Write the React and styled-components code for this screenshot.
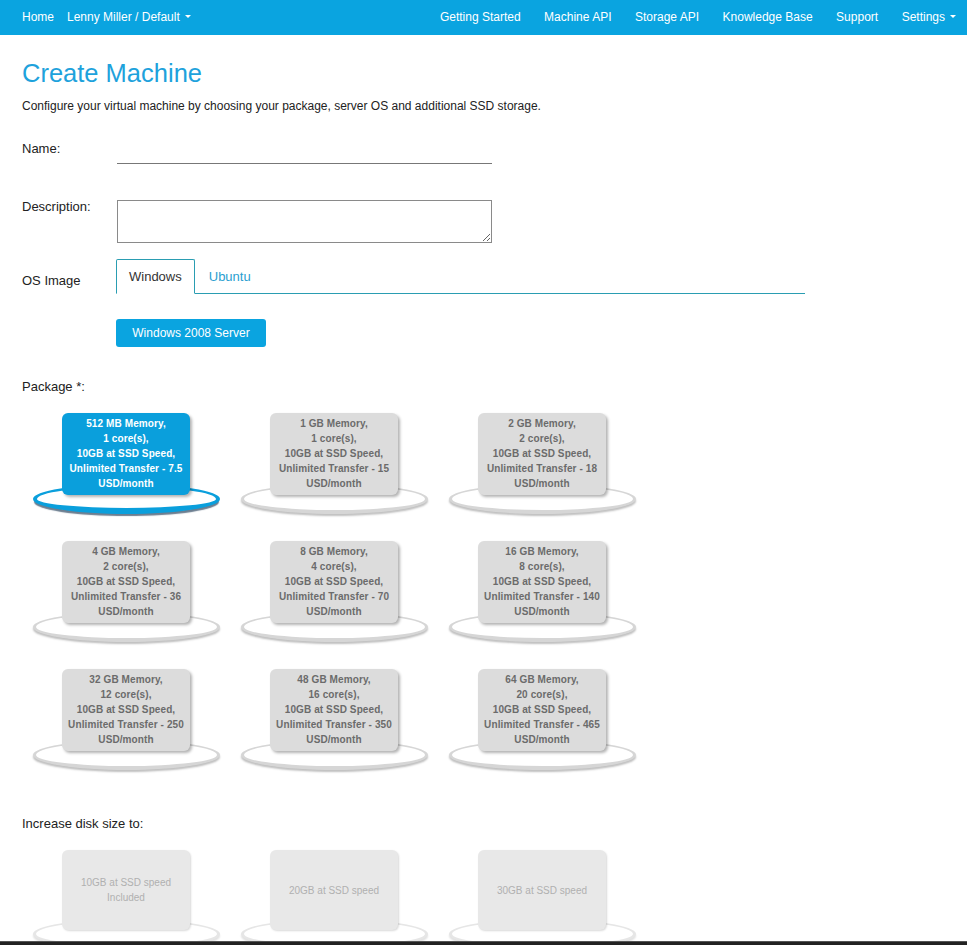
import React from 'react'
import styled, { createGlobalStyle } from 'styled-components'

const GlobalStyle = createGlobalStyle`
  body {
    margin: 0;
    background: #fff;
    font-family: "Liberation Sans", Arial, sans-serif;
    color: #222;
  }
`

const packages = [
  ['512 MB Memory,', '1 core(s),', '10GB at SSD Speed,', 'Unlimited Transfer - 7.5', 'USD/month'],
  ['1 GB Memory,', '1 core(s),', '10GB at SSD Speed,', 'Unlimited Transfer - 15', 'USD/month'],
  ['2 GB Memory,', '2 core(s),', '10GB at SSD Speed,', 'Unlimited Transfer - 18', 'USD/month'],
  ['4 GB Memory,', '2 core(s),', '10GB at SSD Speed,', 'Unlimited Transfer - 36', 'USD/month'],
  ['8 GB Memory,', '4 core(s),', '10GB at SSD Speed,', 'Unlimited Transfer - 70', 'USD/month'],
  ['16 GB Memory,', '8 core(s),', '10GB at SSD Speed,', 'Unlimited Transfer - 140', 'USD/month'],
  ['32 GB Memory,', '12 core(s),', '10GB at SSD Speed,', 'Unlimited Transfer - 250', 'USD/month'],
  ['48 GB Memory,', '16 core(s),', '10GB at SSD Speed,', 'Unlimited Transfer - 350', 'USD/month'],
  ['64 GB Memory,', '20 core(s),', '10GB at SSD Speed,', 'Unlimited Transfer - 465', 'USD/month'],
]

const disks = [
  ['10GB at SSD speed', 'Included'],
  ['20GB at SSD speed'],
  ['30GB at SSD speed'],
]

const NavBar = styled.nav`
  display: flex;
  justify-content: space-between;
  align-items: center;
  height: 35px;
  box-sizing: border-box;
  padding: 0 11px 2px 22px;
  background: #0aa4e0;
`

const NavGroup = styled.div`
  display: flex;
  align-items: center;
  gap: ${p => p.$gap}px;
`

const NavLink = styled.a`
  color: #fff;
  font-size: 12px;
  text-decoration: none;
  white-space: nowrap;
  display: flex;
  align-items: center;
`

const Caret = styled.span`
  display: inline-block;
  margin-left: 5px;
  border-left: 3px solid transparent;
  border-right: 3px solid transparent;
  border-top: 3px solid #fff;
`

const Main = styled.main`
  padding: 24px 22px 0;
`

const Title = styled.h1`
  margin: 0;
  font-size: 25.5px;
  line-height: 28px;
  font-weight: normal;
  color: #1ea2dc;
`

const Lead = styled.p`
  margin: 11px 0 0;
  font-size: 12px;
  line-height: 17px;
`

const FormRow = styled.div`
  display: flex;
  align-items: flex-start;
  margin-top: ${p => p.$top}px;
`

const Label = styled.div`
  width: 95px;
  flex: none;
  font-size: 13px;
  line-height: 17px;
  padding-top: ${p => p.$pad || 0}px;
`

const TextInput = styled.input`
  width: 375px;
  height: 24px;
  box-sizing: border-box;
  border: none;
  border-bottom: 1px solid #777;
  outline: none;
  font: inherit;
`

const TextArea = styled.textarea`
  width: 375px;
  height: 43px;
  box-sizing: border-box;
  margin: 2px 0 0;
  border: 1px solid #8a8a8a;
  font: inherit;
`

const Tabs = styled.div`
  display: flex;
  width: 689px;
  margin-left: -1px;
  border-bottom: 1px solid #2a9db2;
`

const Tab = styled.div`
  height: 33px;
  display: flex;
  align-items: center;
  padding: 0 ${p => (p.$active ? 12 : 13)}px;
  font-size: 13px;
  color: ${p => (p.$active ? '#333' : '#2a9ed0')};
  border: 1px solid ${p => (p.$active ? '#2a9db2' : 'transparent')};
  border-bottom-color: ${p => (p.$active ? '#fff' : 'transparent')};
  border-radius: 2px 2px 0 0;
  margin-bottom: -1px;
  background: ${p => (p.$active ? '#fff' : 'transparent')};
`

const ButtonRow = styled.div`
  margin: 25px 0 0 94px;
`

const Button = styled.button`
  width: 150px;
  height: 28px;
  border: none;
  border-radius: 3px;
  background: #0aa4e0;
  color: #fff;
  font-family: inherit;
  font-size: 12px;
  padding: 0;
`

const SectionLabel = styled.div`
  margin-top: ${p => p.$top}px;
  font-size: 13px;
  line-height: 17px;
`

const TileGrid = styled.div`
  display: grid;
  grid-template-columns: repeat(3, 208px);
  grid-auto-rows: ${p => p.$row}px;
  margin-top: 18px;
`

const Tile = styled.div`
  position: relative;
  display: flex;
  justify-content: center;

  &::before {
    content: '';
    position: absolute;
    left: 11px;
    top: ${p => p.$ringTop}px;
    width: 187px;
    height: 30px;
    box-sizing: border-box;
    border-radius: 50%;
    background: #fff;
    border: ${p => (p.$selected ? '4px' : '3px')} solid ${p => (p.$selected ? '#0a9fdc' : p.$faint ? '#e6e6e6' : '#d6d6d6')};
    border-top-width: ${p => (p.$selected ? 3 : 2)}px;
    border-bottom-width: ${p => (p.$selected ? 6 : 4)}px;
    box-shadow: ${p =>
      p.$selected
        ? '0 3px 1px -1px rgba(10, 40, 70, 0.6)'
        : p.$faint
        ? '0 2px 2px rgba(0, 0, 0, 0.12)'
        : '0 2px 2px rgba(0, 0, 0, 0.25)'};
  }
`

const Card = styled.div`
  position: relative;
  width: 128px;
  height: ${p => p.$h}px;
  box-sizing: border-box;
  padding-top: 3px;
  border-radius: 6px;
  background: ${p => (p.$selected ? '#0a9fdc' : '#dcdcdc')};
  color: ${p => (p.$selected ? '#fff' : '#6b6b6b')};
  box-shadow: 2px 2px 3px rgba(0, 0, 0, 0.3);
  text-align: center;
  font-size: 10px;
  font-weight: bold;
  line-height: 15px;
  letter-spacing: 0.1px;
  white-space: nowrap;
`

const DiskCard = styled.div`
  position: relative;
  width: 128px;
  height: 80px;
  display: flex;
  flex-direction: column;
  justify-content: center;
  border-radius: 6px;
  background: #e8e8e8;
  box-shadow: 1px 1px 2px rgba(0, 0, 0, 0.15);
  color: #b0b0b0;
  text-align: center;
  font-size: 10px;
  line-height: 15px;
`

const Footer = styled.footer`
  position: relative;
  z-index: 1;
  height: 40px;
  background: #222;
  border-top: 1px solid #555;
`

export default function App() {
  return (
    <>
      <GlobalStyle />
      <NavBar>
        <NavGroup $gap={13}>
          <NavLink>Home</NavLink>
          <NavLink>Lenny Miller / Default<Caret /></NavLink>
        </NavGroup>
        <NavGroup $gap={23.5}>
          <NavLink>Getting Started</NavLink>
          <NavLink>Machine API</NavLink>
          <NavLink>Storage API</NavLink>
          <NavLink>Knowledge Base</NavLink>
          <NavLink>Support</NavLink>
          <NavLink>Settings<Caret /></NavLink>
        </NavGroup>
      </NavBar>
      <Main>
        <Title>Create Machine</Title>
        <Lead>Configure your virtual machine by choosing your package, server OS and additional SSD storage.</Lead>

        <FormRow $top={25}>
          <Label>Name:</Label>
          <TextInput />
        </FormRow>
        <FormRow $top={34}>
          <Label>Description:</Label>
          <TextArea />
        </FormRow>
        <FormRow $top={16}>
          <Label $pad={13}>OS Image</Label>
          <Tabs>
            <Tab $active>Windows</Tab>
            <Tab>Ubuntu</Tab>
          </Tabs>
        </FormRow>
        <ButtonRow>
          <Button>Windows 2008 Server</Button>
        </ButtonRow>

        <SectionLabel $top={31}>Package *:</SectionLabel>
        <TileGrid $row={128}>
          {packages.map((lines, i) => (
            <Tile key={i} $selected={i === 0} $ringTop={71}>
              <Card $selected={i === 0} $h={82}>
                {lines.map(l => <div key={l}>{l}</div>)}
              </Card>
            </Tile>
          ))}
        </TileGrid>

        <SectionLabel $top={18}>Increase disk size to:</SectionLabel>
        <TileGrid $row={91}>
          {disks.map((lines, i) => (
            <Tile key={i} $faint $ringTop={69}>
              <DiskCard>
                {lines.map(l => <div key={l}>{l}</div>)}
              </DiskCard>
            </Tile>
          ))}
        </TileGrid>
      </Main>
      <Footer />
    </>
  )
}
